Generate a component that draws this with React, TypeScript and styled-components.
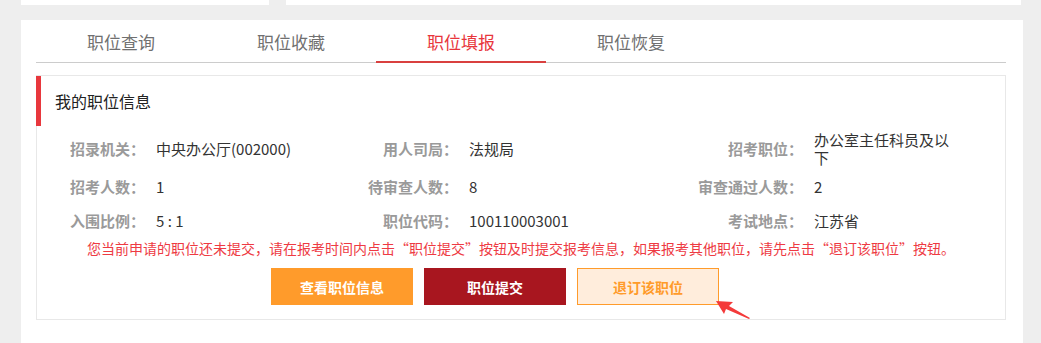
import React from "react";
import styled, { createGlobalStyle } from "styled-components";

const Global = createGlobalStyle`
  html, body { margin: 0; padding: 0; background: #eeeeee; }
  body { font-family: "Noto Sans CJK SC", "Noto Sans", sans-serif; }
  * { box-sizing: border-box; }
`;

const Page = styled.div`
  width: 1041px;
  height: 343px;
  overflow: hidden;
  background: #eeeeee;
`;

const TopRow = styled.div`
  display: flex;
  gap: 17px;
  padding-left: 21px;
  height: 5px;
`;

const TopCard = styled.div<{ $w: number }>`
  width: ${(p) => p.$w}px;
  height: 5px;
  background: #fff;
`;

const Panel = styled.div`
  margin: 15px 18px 0 21px;
  background: #fff;
  padding: 0 17px 30px 15px;
  height: 330px;
`;

const Tabs = styled.div`
  display: flex;
  align-items: flex-start;
  height: 43px;
  border-bottom: 1px solid #cccccc;
`;

const Tab = styled.div<{ $active?: boolean }>`
  width: 170px;
  height: ${(p) => (p.$active ? 43 : 42)}px;
  margin-bottom: ${(p) => (p.$active ? -1 : 0)}px;
  border-bottom: ${(p) => (p.$active ? "2px solid #d9403f" : "none")};
  text-align: center;
  font-size: 17px;
  line-height: 44px;
  color: ${(p) => (p.$active ? "#e8353b" : "#707070")};
`;

const InfoBox = styled.div`
  position: relative;
  margin-top: 12px;
  border: 1px solid #e8e8e8;
  padding-bottom: 14px;
`;

const Title = styled.div`
  height: 50px;
  margin-left: -1px;
  border-left: 5px solid #e8373d;
  padding-left: 14px;
  font-size: 16px;
  line-height: 50px;
  color: #222;
`;

const Grid = styled.div`
  display: grid;
  grid-template-columns: 108px 196px 117px 228px 117px 153px;
  grid-template-rows: 40px 35px 34px;
  align-items: center;
  margin-top: 3px;
`;

const Label = styled.div`
  text-align: right;
  font-size: 15px;
  font-weight: bold;
  color: #9a9a9a;
  line-height: 18px;
  white-space: nowrap;
`;

const Value = styled.div`
  padding-left: 11px;
  font-size: 15px;
  color: #333;
  line-height: 18px;
  white-space: pre-wrap;
`;

const Notice = styled.div`
  text-align: center;
  font-size: 14px;
  line-height: 20px;
  color: #ee3a43;
`;

const Buttons = styled.div`
  display: flex;
  gap: 11px;
  margin-top: 10px;
  padding-left: 234px;
`;

const Btn = styled.div<{ $kind: "orange" | "red" | "light" }>`
  width: 142px;
  height: 37px;
  display: flex;
  align-items: center;
  justify-content: center;
  font-size: 14px;
  font-weight: bold;
  background: ${(p) =>
    p.$kind === "orange" ? "#ff9b2b" : p.$kind === "red" ? "#a8161f" : "#ffeddc"};
  color: ${(p) => (p.$kind === "light" ? "#ff9b2b" : "#fff")};
  border: ${(p) => (p.$kind === "light" ? "1px solid #ff9b2b" : "none")};
`;

const Arrow = styled.svg`
  position: absolute;
  left: 677px;
  top: 223px;
  width: 40px;
  height: 24px;
  overflow: visible;
`;

const tabs = ["职位查询", "职位收藏", "职位填报", "职位恢复"];

const rows: [string, string][][] = [
  [
    ["招录机关：", "中央办公厅(002000)"],
    ["用人司局：", "法规局"],
    ["招考职位：", "办公室主任科员及以下"],
  ],
  [
    ["招考人数：", "1"],
    ["待审查人数：", "8"],
    ["审查通过人数：", "2"],
  ],
  [
    ["入围比例：", "5 : 1"],
    ["职位代码：", "100110003001"],
    ["考试地点：", "江苏省"],
  ],
];

export default function App() {
  return (
    <Page>
      <Global />
      <TopRow>
        <TopCard $w={248} />
        <TopCard $w={735} />
      </TopRow>
      <Panel>
        <Tabs>
          {tabs.map((t, i) => (
            <Tab key={t} $active={i === 2}>
              {t}
            </Tab>
          ))}
        </Tabs>
        <InfoBox>
          <Title>我的职位信息</Title>
          <Grid>
            {rows.map((r, ri) =>
              r.map(([l, v], ci) => (
                <React.Fragment key={`${ri}-${ci}`}>
                  <Label>{l}</Label>
                  <Value>{v}</Value>
                </React.Fragment>
              ))
            )}
          </Grid>
          <Notice>
            您当前申请的职位还未提交，请在报考时间内点击“职位提交”按钮及时提交报考信息，如果报考其他职位，请先点击“退订该职位”按钮。
          </Notice>
          <Buttons>
            <Btn $kind="orange">查看职位信息</Btn>
            <Btn $kind="red">职位提交</Btn>
            <Btn $kind="light">退订该职位</Btn>
          </Buttons>
          <Arrow viewBox="0 0 40 24">
            <polygon
              points="2,2 19,3 15,7 36,19 35,20 12,10 10,15"
              fill="#f43a3a"
            />
          </Arrow>
        </InfoBox>
      </Panel>
    </Page>
  );
}
